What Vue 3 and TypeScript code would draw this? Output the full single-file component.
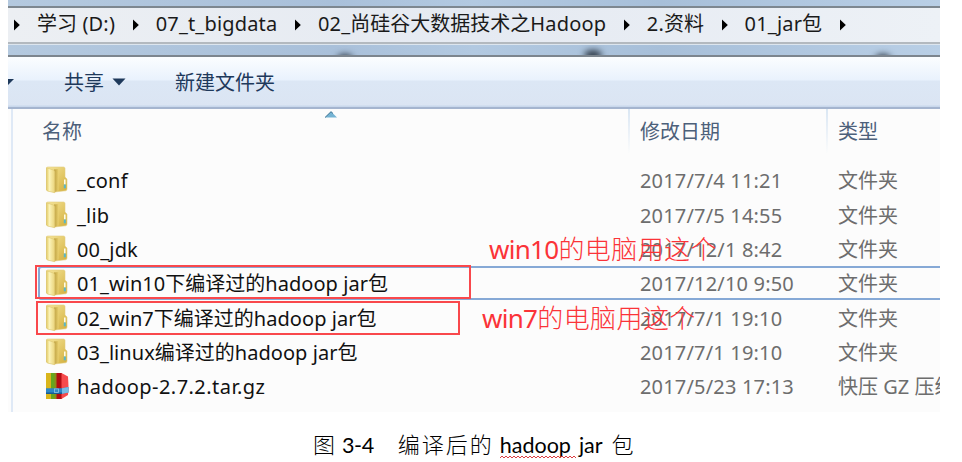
<script setup lang="ts">
interface FileRow {
  name: string
  date: string
  type: string
  icon: 'folder' | 'archive'
  selected?: boolean
}

interface Segment {
  text: string
  latin: boolean
}

const crumbs: string[] = ['学习 (D:)', '07_t_bigdata', '02_尚硅谷大数据技术之Hadoop', '2.资料', '01_jar包']

const rows: FileRow[] = [
  { name: '_conf', date: '2017/7/4 11:21', type: '文件夹', icon: 'folder' },
  { name: '_lib', date: '2017/7/5 14:55', type: '文件夹', icon: 'folder' },
  { name: '00_jdk', date: '2017/12/1 8:42', type: '文件夹', icon: 'folder' },
  { name: '01_win10下编译过的hadoop jar包', date: '2017/12/10 9:50', type: '文件夹', icon: 'folder', selected: true },
  { name: '02_win7下编译过的hadoop jar包', date: '2017/7/1 19:10', type: '文件夹', icon: 'folder' },
  { name: '03_linux编译过的hadoop jar包', date: '2017/7/1 19:10', type: '文件夹', icon: 'folder' },
  { name: 'hadoop-2.7.2.tar.gz', date: '2017/5/23 17:13', type: '快压 GZ 压缩文件', icon: 'archive' },
]

// Splits a label into Latin and Chinese runs so each can be spaced on its own.
function segments(text: string): Segment[] {
  const parts = text.match(/[\x20-\x7e]+|[^\x20-\x7e]+/g) ?? []
  return parts.map((part) => ({ text: part, latin: /^[\x20-\x7e]/.test(part) }))
}
</script>

<template>
  <div class="page">
    <div class="window">
      <div class="glass top"></div>
      <nav class="address">
        <template v-for="crumb in crumbs" :key="crumb">
          <svg class="arrow" width="8" height="12" viewBox="0 0 8 12"><path d="M1 0.5 6.8 6 1 11.5Z" fill="#000" /></svg>
          <span class="crumb"><span v-for="(s, i) in segments(crumb)" :key="i" :class="{ latin: s.latin }">{{ s.text }}</span></span>
        </template>
        <svg class="arrow" width="8" height="12" viewBox="0 0 8 12"><path d="M1 0.5 6.8 6 1 11.5Z" fill="#000" /></svg>
      </nav>
      <div class="glass middle">
        <i class="smudge first"></i>
        <i class="smudge second"></i>
        <i class="smudge third"></i>
      </div>
      <div class="toolbar">
        <svg class="cut" width="6" height="7" viewBox="0 0 6 7"><path d="M0 0H6L0 6Z" fill="#1e395b" /></svg>
        <span class="share">共享</span>
        <svg class="drop" width="14" height="8" viewBox="0 0 14 8"><path d="M0.5 0.5H13.5L7 7.5Z" fill="#1e395b" /></svg>
        <span>新建文件夹</span>
      </div>

      <div class="list">
        <div class="head">
          <div class="cell">名称</div>
          <div class="cell ruled">修改日期</div>
          <div class="cell ruled">类型</div>
          <svg class="sort" width="14" height="7" viewBox="0 0 14 7"><path d="M1 6.5 7 0.5 13 6.5Z" fill="#74b3d3" /><path d="M1 6.5 7 .7 9 2.5" fill="none" stroke="#3f7392" /></svg>
        </div>
        <div v-for="row in rows" :key="row.name" class="row" :class="[row.icon, { selected: row.selected }]">
          <div class="name">
            <svg v-if="row.icon === 'folder'" class="icon" width="24" height="28" viewBox="0 0 24 28">
              <defs>
                <linearGradient id="back" x1="0" y1="0" x2="1" y2="1">
                  <stop offset="0" stop-color="#f6e69a" />
                  <stop offset="1" stop-color="#d3af3d" />
                </linearGradient>
                <linearGradient id="front" x1="0" y1="0" x2="1" y2="0">
                  <stop offset="0" stop-color="#e3cb64" />
                  <stop offset="0.35" stop-color="#fbf3b9" />
                  <stop offset="1" stop-color="#ead47a" />
                </linearGradient>
                <linearGradient id="fold" x1="0" y1="0" x2="1" y2="0">
                  <stop offset="0" stop-color="#b99b3b" />
                  <stop offset="1" stop-color="#e9d06f" />
                </linearGradient>
              </defs>
              <path d="M1.5 2 Q1.5 1 3 1H18.5Q20 1 20 2.5V11L22 13V23Q22 24.6 20.5 24.8L9 26 1.5 24Z" fill="url(#back)" stroke="#e2cd80" stroke-width="0.6" />
              <path d="M9 3.5 13.5 3V24.5L9 26.3Z" fill="url(#fold)" />
              <path d="M1.5 1.8 8.3 4Q9.8 4.6 9.8 6V26.7L3 25.2Q1.5 24.8 1.5 23.6Z" fill="url(#front)" stroke="#dcc672" stroke-width="0.6" />
              <path d="M19.8 13.5V18.5" stroke="#fffbe5" stroke-width="1.6" />
              <path d="M19.8 18.5V22.3" stroke="#57b7c9" stroke-width="2" />
            </svg>
            <svg v-else class="icon" width="24" height="28" viewBox="0 0 24 28">
              <path d="M1 1H6.5V27H1Z" fill="#d9b51c" />
              <path d="M6 1H12V27H6Z" fill="#66a61e" />
              <path d="M9.5 1H12V27H9.5Z" fill="#8c8b1c" />
              <path d="M11.5 1H17V27H11.5Z" fill="#b30d12" />
              <path d="M16.5 1 23 4.5Q24 14 23 23L16.5 27Z" fill="#f64b4c" />
              <path d="M1 16.2H17L23.5 15V20.5L17 21.8H1Z" fill="#2c87c8" />
              <path d="M17 16.2 23.5 15V20.5L17 21.8Z" fill="#77bce4" />
              <path d="M1 20.5H17V22H1Z" fill="#175c95" />
              <rect x="9.5" y="16.9" width="4" height="3.6" fill="#328bc5" stroke="#8cc6e6" stroke-width="0.8" />
            </svg>
            <span><span v-for="(s, i) in segments(row.name)" :key="i" :class="{ latin: s.latin, mixed: segments(row.name).length > 1 }">{{ s.text }}</span></span>
          </div>
          <div class="meta latin">{{ row.date }}</div>
          <div class="meta">{{ row.type }}</div>
        </div>
        <div class="box win10"></div>
        <div class="box win7"></div>
        <div class="note win10"><span class="latin">win10</span>的电脑用这个</div>
        <div class="note win7"><span class="latin">win7</span>的电脑用这个</div>
      </div>
    </div>
    <div class="caption">
      <span>图</span><span class="num">3-4</span><span class="title">编译后的</span><span class="word">hadoop<svg class="wave" width="76" height="4" viewBox="0 0 76 4"><path d="M0 3 l2-2 2 2 2-2 2 2 2-2 2 2 2-2 2 2 2-2 2 2 2-2 2 2 2-2 2 2 2-2 2 2 2-2 2 2 2-2 2 2 2-2 2 2 2-2 2 2 2-2 2 2 2-2 2 2 2-2 2 2 2-2 2 2 2-2 2 2 2-2 2 2 2-2 2 2 2-2" fill="none" stroke="#d8282c" stroke-width="0.9" /></svg></span><span class="jar">jar</span><span>包</span>
    </div>
  </div>
</template>

<style>
body {
  margin: 0;
  background: #fff;
}
</style>

<style scoped>
.page {
  width: 962px;
  height: 462px;
  overflow: hidden;
  background: #fff;
  font-family: "Noto Sans", "Noto Sans CJK SC", sans-serif;
  font-size: 20px;
  line-height: 28px;
  white-space: nowrap;
}
.window {
  width: 932px;
  height: 412px;
  margin-left: 8px;
  overflow: hidden;
}
.latin {
  letter-spacing: 0.18px;
}
.latin.mixed {
  letter-spacing: 0.05px;
}
.archive .name .latin {
  letter-spacing: 0.45px;
}
.glass {
  box-sizing: border-box;
  background: linear-gradient(90deg, #b4c9df, #a9c0da 35%, #b2c9e1 50%, #a7bfd9 70%, #b9cfe6);
}
.glass.top {
  height: 8px;
  border-bottom: 2px solid #7d8790;
}
.glass.middle {
  position: relative;
  height: 13px;
  border-top: 1px solid #dce5ee;
  border-bottom: 2px solid #7c858e;
  overflow: hidden;
}
.smudge {
  position: absolute;
  top: 5px;
  height: 10px;
  border-radius: 50%;
  background: #34404e;
  filter: blur(3px);
}
.smudge.first {
  left: 329px;
  top: 9px;
  width: 16px;
}
.smudge.second {
  left: 576px;
  width: 18px;
}
.smudge.third {
  left: 867px;
  top: 9px;
  width: 16px;
}
.address {
  display: flex;
  align-items: center;
  box-sizing: border-box;
  height: 36px;
  padding: 0 0 2px 5px;
  border-bottom: 2px solid #b3b9bf;
  background: linear-gradient(90deg, #eceff3, #e5eaf2 50%, #edf1f6);
  color: #1a1a1a;
}
.arrow {
  flex: none;
  margin-top: 2px;
}
.crumb {
  margin: 0 16.6px 0 16px;
}
.toolbar {
  display: flex;
  align-items: center;
  box-sizing: border-box;
  height: 52px;
  padding-top: 2px;
  border-bottom: 2px solid #a5b5cf;
  background: linear-gradient(#fbfdff, #e9f2fd 23px, #dce7f5 24px, #dbe5f3 48px, #c9d8ec 49px);
  color: #1e395b;
}
.cut {
  width: 6px;
  margin-top: -2px;
}
.share {
  margin-left: 50px;
}
.drop {
  margin: -2px 49px 0 8px;
}
.list {
  position: relative;
  height: 303px;
  box-sizing: border-box;
  border-left: 3px solid #fcfcfc;
  background: #fcfcfc;
}
.list::before {
  content: "";
  position: absolute;
  left: 0;
  top: 0;
  bottom: 0;
  width: 2px;
  background: #dfe9f6;
}
.head,
.row {
  display: grid;
  grid-template-columns: 617px 198px 1fr;
  align-items: center;
}
.head {
  position: relative;
  height: 54px;
  color: #4c607a;
}
.cell {
  height: 44px;
  line-height: 46px;
  align-self: start;
  padding-left: 31px;
}
.cell.ruled {
  padding-left: 10px;
  border-left: 2px solid;
  border-image: linear-gradient(#d9e6f3, #fcfcfc) 1;
}
.sort {
  position: absolute;
  left: 313px;
  top: 2px;
}
.row {
  box-sizing: border-box;
  height: 34.35px;
  padding-top: 2px;
  color: #111;
}
.row.selected {
  margin-left: 27px;
  grid-template-columns: 590px 198px 1fr;
  box-shadow: inset 2px 0 #86a9d6, inset 0 2px #86a9d6, inset 0 -2px #86a9d6;
  border-radius: 4px 0 0 4px;
}
.row.selected .name {
  padding-left: 7px;
}
.name {
  display: flex;
  align-items: center;
  padding-left: 34px;
}
.icon {
  flex: none;
  margin: -2px 8px 0 0;
}
.meta {
  padding-left: 12px;
  color: #6d6d6d;
}
.box {
  position: absolute;
  box-sizing: border-box;
  border: 2px solid #f9484c;
}
.box.win10 {
  left: 24px;
  top: 156px;
  width: 436px;
  height: 34px;
}
.box.win7 {
  left: 25px;
  top: 192px;
  width: 424px;
  height: 34px;
}
.note {
  position: absolute;
  color: #fb3338;
  font-size: 26px;
  font-weight: 300;
  line-height: 36px;
  letter-spacing: 0.4px;
}
.note .latin {
  font-weight: 400;
  letter-spacing: -0.7px;
}
.note.win10 {
  left: 478px;
  top: 122px;
}
.note.win7 {
  left: 471px;
  top: 191px;
}
.caption {
  display: flex;
  align-items: baseline;
  margin: 13px 0 0 313px;
  font-family: Lato, "Noto Sans CJK SC", sans-serif;
  font-size: 21.5px;
  line-height: 36px;
  font-weight: 400;
  color: #000;
}
.caption > span:not(.num, .word, .jar) {
  font-family: "Noto Sans CJK SC", sans-serif;
  font-size: 22px;
  font-weight: 300;
}
.num {
  margin: 0 24px 0 7px;
  letter-spacing: -0.4px;
}
.title {
  letter-spacing: 2px;
}
.word {
  position: relative;
  margin: 0 8px 0 6px;
}
.wave {
  position: absolute;
  left: 0;
  bottom: 4px;
}
.jar {
  margin-right: 9px;
}
</style>
